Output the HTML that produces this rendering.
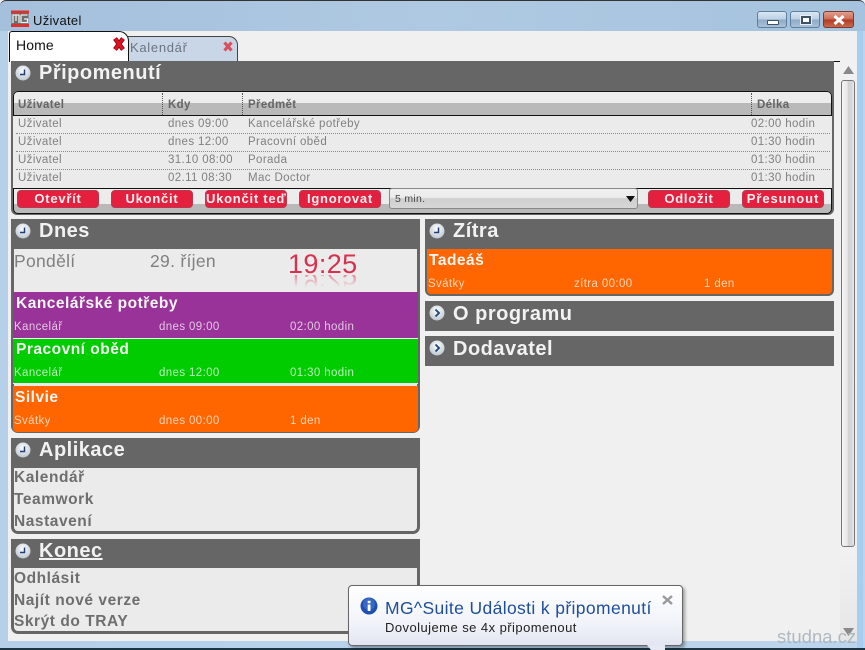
<!DOCTYPE html>
<html lang="cs">
<head>
<meta charset="utf-8">
<title>Uživatel</title>
<style>
html,body{margin:0;padding:0;width:865px;height:650px;overflow:hidden;background:#f0f0f0}
body{position:relative;font-family:"Liberation Sans",sans-serif;color:#666}
div,span{position:absolute;white-space:nowrap;box-sizing:border-box}
.hd{background:#666;height:30px}
.hd .t{left:28px;top:0;font-size:20px;font-weight:bold;color:#f2f2f2;letter-spacing:.5px;line-height:24px}
.box{background:#ebebeb;border:3px solid #666;border-top:0;border-radius:0 0 7px 7px}
.c{font-size:11.5px;color:#808080;line-height:14px;letter-spacing:.38px}
.h{font-size:11.5px;font-weight:bold;color:#666;line-height:14px;letter-spacing:.35px}
.dot{height:0;border-top:1px dotted #8a8a8a}
.b{height:18px;top:190px;background:#e5203f;border:1px solid #b8394f;border-radius:4px;color:#f5f0f0;font-size:13px;font-weight:bold;text-align:center;line-height:15px;letter-spacing:.75px;overflow:hidden}
.e{color:#fff;height:46px}
.e .n{left:3px;top:2px;font-size:15.5px;font-weight:bold;line-height:20px;letter-spacing:.5px;color:#f6f6f6}
.e .s{font-size:11.5px;line-height:14px;letter-spacing:.38px;opacity:.72}
.l{left:0;font-size:15.5px;font-weight:bold;color:#6e6e6e;line-height:20px;letter-spacing:.55px}
.wb{top:11px;height:17px;border:1px solid #5f7d9c;border-radius:3px;background:linear-gradient(#d9e6f3 0,#bcd0e4 48%,#8eaac6 52%,#a9c2da 100%)}
</style>
</head>
<body>
<!-- window frame -->
<div style="left:0;top:0;width:865px;height:650px;background:linear-gradient(90deg,#b6d0ea 0,#bcd5ec 100%);border-radius:6px 6px 0 0"></div>
<div style="left:0;top:0;width:865px;height:31px;background:linear-gradient(90deg,#a4c0dc 0,#afc9e2 50%,#a5c3de 100%);border-top:1px solid #333;border-radius:6px 6px 0 0"></div>
<div style="left:857px;top:31px;width:6px;height:617px;background:#a8cdee"></div>
<div style="left:0;top:648px;width:865px;height:2px;background:#1d3442"></div>
<div style="left:8px;top:31px;width:849px;height:610px;background:#f0f0f0"></div>

<!-- logo + title -->
<svg style="position:absolute;left:11px;top:10px" width="18" height="18" viewBox="0 0 18 18">
<rect width="18" height="3" y="0.5" fill="#d8332f"/><rect width="18" height="3" y="14" fill="#d8332f"/>
<rect x="0.5" y="3.5" width="17" height="10.5" fill="#6d6d6d"/>
<path d="M2 13V5H8V13M5 5V11M10 5H16.5M10 5V12.5H16.5V9H13" fill="none" stroke="#eee" stroke-width="1.3"/>
</svg>
<div style="left:33px;top:13px;font-size:13px;line-height:16px;color:#111;letter-spacing:.3px">Uživatel</div>

<!-- window buttons -->
<div class="wb" style="left:757px;width:30px"><div style="left:9px;top:8px;width:12px;height:5px;background:#fff;border:1px solid #3f5368;border-radius:1px"></div></div>
<div class="wb" style="left:790px;width:30px"><div style="left:10px;top:4px;width:10px;height:8px;border:2px solid #3f5368;background:#fff;outline:1px solid #e8eef5"></div></div>
<div class="wb" style="left:823px;width:31px;border-color:#7c3a30;background:linear-gradient(#e0a08e 0,#cf6b55 48%,#b23a22 52%,#c96a50 100%)">
<svg style="position:absolute;left:7px;top:1px" width="16" height="14" viewBox="0 0 16 14"><path d="M3.5 3L12.5 11M12.5 3L3.5 11" stroke="#fff" stroke-width="3"/></svg></div>

<!-- tabs -->
<div style="left:128px;top:36px;width:110px;height:26px;background:#c9d6e8;border:1px solid #444;border-bottom:0;border-left:0;border-radius:0 9px 0 0"></div>
<div style="left:130px;top:40px;font-size:13px;line-height:16px;color:#6c7480;letter-spacing:.7px">Kalendář</div>
<svg style="position:absolute;left:222px;top:40px" width="12" height="13" viewBox="0 0 12 13"><path d="M2.5 2.5L9.5 10.5M9.5 2.5L2.5 10.5" stroke="#d8505f" stroke-width="3.2"/></svg>
<div style="left:9px;top:31px;width:120px;height:31px;background:#fff;border:1px solid #111;border-bottom:0;border-radius:3px 10px 0 0"></div>
<div style="left:16px;top:37px;font-size:14px;line-height:16px;color:#111;letter-spacing:.1px">Home</div>
<svg style="position:absolute;left:112px;top:36px" width="14" height="16" viewBox="0 0 14 16"><path d="M3 2.5L11 13.5M11 2.5L3 13.5" stroke="#7a0a12" stroke-width="4.6"/><path d="M3 2.5L11 13.5M11 2.5L3 13.5" stroke="#e01020" stroke-width="3"/></svg>

<svg width="0" height="0" style="position:absolute">
<defs>
<radialGradient id="g" cx="50%" cy="35%" r="70%"><stop offset="0" stop-color="#fff"/><stop offset="1" stop-color="#b9c2cc"/></radialGradient>
<symbol id="clk" viewBox="0 0 16 16"><circle cx="8" cy="8" r="7.5" fill="url(#g)"/><path d="M9.5 4.5V9.5H5" fill="none" stroke="#1f3f78" stroke-width="1.5"/></symbol>
<symbol id="arr" viewBox="0 0 16 16"><circle cx="8" cy="8" r="7.5" fill="url(#g)"/><path d="M6.5 4.5L10 8L6.5 11.5" fill="none" stroke="#1f4a78" stroke-width="1.9"/></symbol>
</defs>
</svg>

<!-- Připomenutí -->
<div style="left:11px;top:61px;width:823px;height:154px;background:#666;border-radius:0 0 6px 6px"></div>
<div style="left:834px;top:61px;width:6px;height:1px;background:#111"></div>
<div class="hd" style="left:11px;top:61px;width:823px">
<svg style="position:absolute;left:4px;top:4px" width="16" height="16"><use href="#clk"/></svg>
<div class="t">Připomenutí</div></div>
<div style="left:13px;top:91px;width:819px;height:122px;background:#ebebeb;border-radius:5px"></div>
<div style="left:13px;top:91px;width:819px;height:25px;border:1px solid #111;border-radius:5px 5px 0 0;background:linear-gradient(#ececec 0,#ececec 11px,#b9b9b9 11px,#b9b9b9 100%)"></div>
<div class="h" style="left:18px;top:98px">Uživatel</div>
<div class="h" style="left:168px;top:98px">Kdy</div>
<div class="h" style="left:248px;top:98px">Předmět</div>
<div class="h" style="left:757px;top:98px">Délka</div>
<div style="left:162px;top:93px;height:22px;border-left:1px dotted #555"></div>
<div style="left:242px;top:93px;height:22px;border-left:1px dotted #555"></div>
<div style="left:751px;top:93px;height:22px;border-left:1px dotted #555"></div>

<div class="c" style="left:18px;top:117px">Uživatel</div><div class="c" style="left:168px;top:117px">dnes 09:00</div><div class="c" style="left:248px;top:117px">Kancelářské potřeby</div><div class="c" style="left:751px;top:117px">02:00 hodin</div>
<div class="dot" style="left:16px;top:133px;width:814px"></div>
<div class="c" style="left:18px;top:135px">Uživatel</div><div class="c" style="left:168px;top:135px">dnes 12:00</div><div class="c" style="left:248px;top:135px">Pracovní oběd</div><div class="c" style="left:751px;top:135px">01:30 hodin</div>
<div class="dot" style="left:16px;top:151px;width:814px"></div>
<div class="c" style="left:18px;top:153px">Uživatel</div><div class="c" style="left:168px;top:153px">31.10 08:00</div><div class="c" style="left:248px;top:153px">Porada</div><div class="c" style="left:751px;top:153px">01:30 hodin</div>
<div class="dot" style="left:16px;top:169px;width:814px"></div>
<div class="c" style="left:18px;top:171px">Uživatel</div><div class="c" style="left:168px;top:171px">02.11 08:30</div><div class="c" style="left:248px;top:171px">Mac Doctor</div><div class="c" style="left:751px;top:171px">01:30 hodin</div>

<div style="left:13px;top:188px;width:819px;height:26px;border:1px solid #111;border-radius:0 0 5px 5px;background:linear-gradient(#ececec 0,#ececec 15px,#b9b9b9 15px,#b9b9b9 100%)"></div>
<div class="b" style="left:17px;width:82px">Otevřít</div>
<div class="b" style="left:111px;width:82px">Ukončit</div>
<div class="b" style="left:205px;width:82px">Ukončit teď</div>
<div class="b" style="left:299px;width:82px">Ignorovat</div>
<div style="left:389px;top:188px;width:249px;height:21px;border:1px solid #888;border-radius:3px;background:linear-gradient(#f0f0f0 0,#ececec 45%,#cfcfcf 50%,#d6d6d6 100%);font-size:10.5px;line-height:20px;padding-left:5px;color:#444;letter-spacing:.3px">5 min.
<svg style="position:absolute;left:236px;top:7px" width="9" height="6"><path d="M0 0H9L4.5 6Z" fill="#111"/></svg></div>
<div class="b" style="left:648px;width:82px">Odložit</div>
<div class="b" style="left:742px;width:82px;letter-spacing:.9px">Přesunout</div>

<!-- Dnes -->
<div class="box" style="left:11px;top:249px;width:409px;height:184px"></div>
<div class="hd" style="left:11px;top:219px;width:409px">
<svg style="position:absolute;left:4px;top:4px" width="16" height="16"><use href="#clk"/></svg>
<div class="t">Dnes</div></div>
<div style="left:14px;top:251px;font-size:17.5px;line-height:20px;color:#808080;letter-spacing:.3px">Pondělí</div>
<div style="left:150px;top:251px;font-size:17.5px;line-height:20px;color:#808080;letter-spacing:.3px">29. říjen</div>
<div style="left:288px;top:249px;font-size:27px;line-height:30px;color:#d8304f;letter-spacing:.4px">19:25</div>
<div style="left:288px;top:275px;width:72px;height:12px;overflow:hidden;opacity:.5;-webkit-mask-image:linear-gradient(#000,transparent);mask-image:linear-gradient(#000,transparent)"><div style="left:0;top:-8px;font-size:27px;line-height:30px;color:#d8304f;letter-spacing:.4px;transform:scaleY(-1)">19:25</div></div>

<div class="e" style="left:13px;top:292px;width:405px;background:#993399"><div class="n">Kancelářské potřeby</div><div class="s" style="left:1px;top:28px">Kancelář</div><div class="s" style="left:146px;top:28px">dnes 09:00</div><div class="s" style="left:277px;top:28px">02:00 hodin</div></div>
<div class="e" style="left:13px;top:338px;width:405px;height:46px;background:#00cc00;border-top:1px solid #f0f0f0;border-bottom:1px solid #f0f0f0"><div class="n" style="top:1px">Pracovní oběd</div><div class="s" style="left:1px;top:27px">Kancelář</div><div class="s" style="left:146px;top:27px">dnes 12:00</div><div class="s" style="left:277px;top:27px">01:30 hodin</div></div>
<div class="e" style="left:13px;top:386px;width:405px;background:#ff6600;border-radius:0 0 4px 4px"><div class="n" style="left:2px;top:2px">Silvie</div><div class="s" style="left:1px;top:28px">Svátky</div><div class="s" style="left:146px;top:28px">dnes 00:00</div><div class="s" style="left:277px;top:28px">1 den</div></div>

<!-- Aplikace -->
<div class="box" style="left:11px;top:468px;width:409px;height:66px">
<div class="l" style="top:0">Kalendář</div><div class="l" style="top:22px">Teamwork</div><div class="l" style="top:44px">Nastavení</div></div>
<div class="hd" style="left:11px;top:438px;width:409px">
<svg style="position:absolute;left:4px;top:4px" width="16" height="16"><use href="#clk"/></svg>
<div class="t">Aplikace</div></div>

<!-- Konec -->
<div class="box" style="left:11px;top:568px;width:409px;height:66px">
<div class="l" style="top:1px">Odhlásit</div><div class="l" style="top:23px">Najít nové verze</div><div class="l" style="top:44px">Skrýt do TRAY</div></div>
<div class="hd" style="left:11px;top:539px;width:409px;height:29px">
<svg style="position:absolute;left:4px;top:4px" width="16" height="16"><use href="#clk"/></svg>
<div class="t" style="text-decoration:underline">Konec</div></div>

<!-- Zítra -->
<div class="hd" style="left:425px;top:219px;width:409px">
<svg style="position:absolute;left:4px;top:4px" width="16" height="16"><use href="#clk"/></svg>
<div class="t">Zítra</div></div>
<div class="e" style="left:425px;top:249px;width:409px;height:47px;background:#ff6600;border:solid #666;border-width:0 2px 2px 2px;border-radius:0 0 6px 6px"><div class="n" style="left:2px;top:2px">Tadeáš</div><div class="s" style="left:1px;top:28px">Svátky</div><div class="s" style="left:147px;top:28px">zítra 00:00</div><div class="s" style="left:277px;top:28px">1 den</div></div>

<div class="hd" style="left:425px;top:301px;width:409px">
<svg style="position:absolute;left:4px;top:4px" width="16" height="16"><use href="#arr"/></svg>
<div class="t" style="top:1px">O programu</div></div>
<div class="hd" style="left:425px;top:336px;width:409px">
<svg style="position:absolute;left:4px;top:4px" width="16" height="16"><use href="#arr"/></svg>
<div class="t" style="top:1px">Dodavatel</div></div>

<!-- scrollbar -->
<div style="left:840px;top:62px;width:17px;height:579px;background:linear-gradient(#f1f1f1 0,#f1f1f1 85%,#e6e6e6 100%)"></div>
<svg style="position:absolute;left:843px;top:66px" width="11" height="8"><path d="M5.5 0L11 8H0Z" fill="#8a8a8a"/></svg>
<div style="left:841px;top:80px;width:14px;height:467px;border:1px solid #777;border-radius:3px;background:linear-gradient(90deg,#f4f4f4 0,#e8e8e8 45%,#d2d2d2 50%,#d8d8d8 85%,#f0f0f0 100%)"></div>
<svg style="position:absolute;left:843px;top:628px" width="11" height="8"><path d="M0 0H11L5.5 8Z" fill="#8a8a8a"/></svg>

<!-- balloon -->
<div style="left:348px;top:585px;width:335px;height:61px;border:1px solid #666;border-radius:4px;background:linear-gradient(#fff 0,#f2f4fa 60%,#e3e6f2 100%);box-shadow:2px 2px 3px rgba(0,0,0,.35)"></div>
<svg style="position:absolute;left:646px;top:645px" width="22" height="5"><path d="M1 0H19V5H5Z" fill="#e6e9f3"/></svg>
<svg style="position:absolute;left:360px;top:597px" width="18" height="18" viewBox="0 0 18 18"><circle cx="9" cy="9" r="8.5" fill="#1f50b0"/><circle cx="9" cy="7" r="6" fill="#4a7ad2" opacity=".6"/><rect x="7.7" y="7.5" width="2.8" height="6.5" fill="#fff"/><rect x="7.7" y="3.8" width="2.8" height="2.4" fill="#fff"/></svg>
<div style="left:385px;top:597px;font-size:17.5px;line-height:22px;color:#1f4e9c;letter-spacing:.37px">MG^Suite Události k připomenutí</div>
<div style="left:385px;top:620px;font-size:13px;line-height:16px;color:#222;letter-spacing:.45px">Dovolujeme se 4x připomenout</div>
<svg style="position:absolute;left:661px;top:594px" width="13" height="12"><path d="M2 2L11 10M11 2L2 10" stroke="#9a9a9a" stroke-width="2.4"/></svg>

<!-- watermark -->
<div style="left:777px;top:626px;font-size:18.5px;line-height:22px;color:#a9b4bc;opacity:.9">studna.cz</div>
</body>
</html>
